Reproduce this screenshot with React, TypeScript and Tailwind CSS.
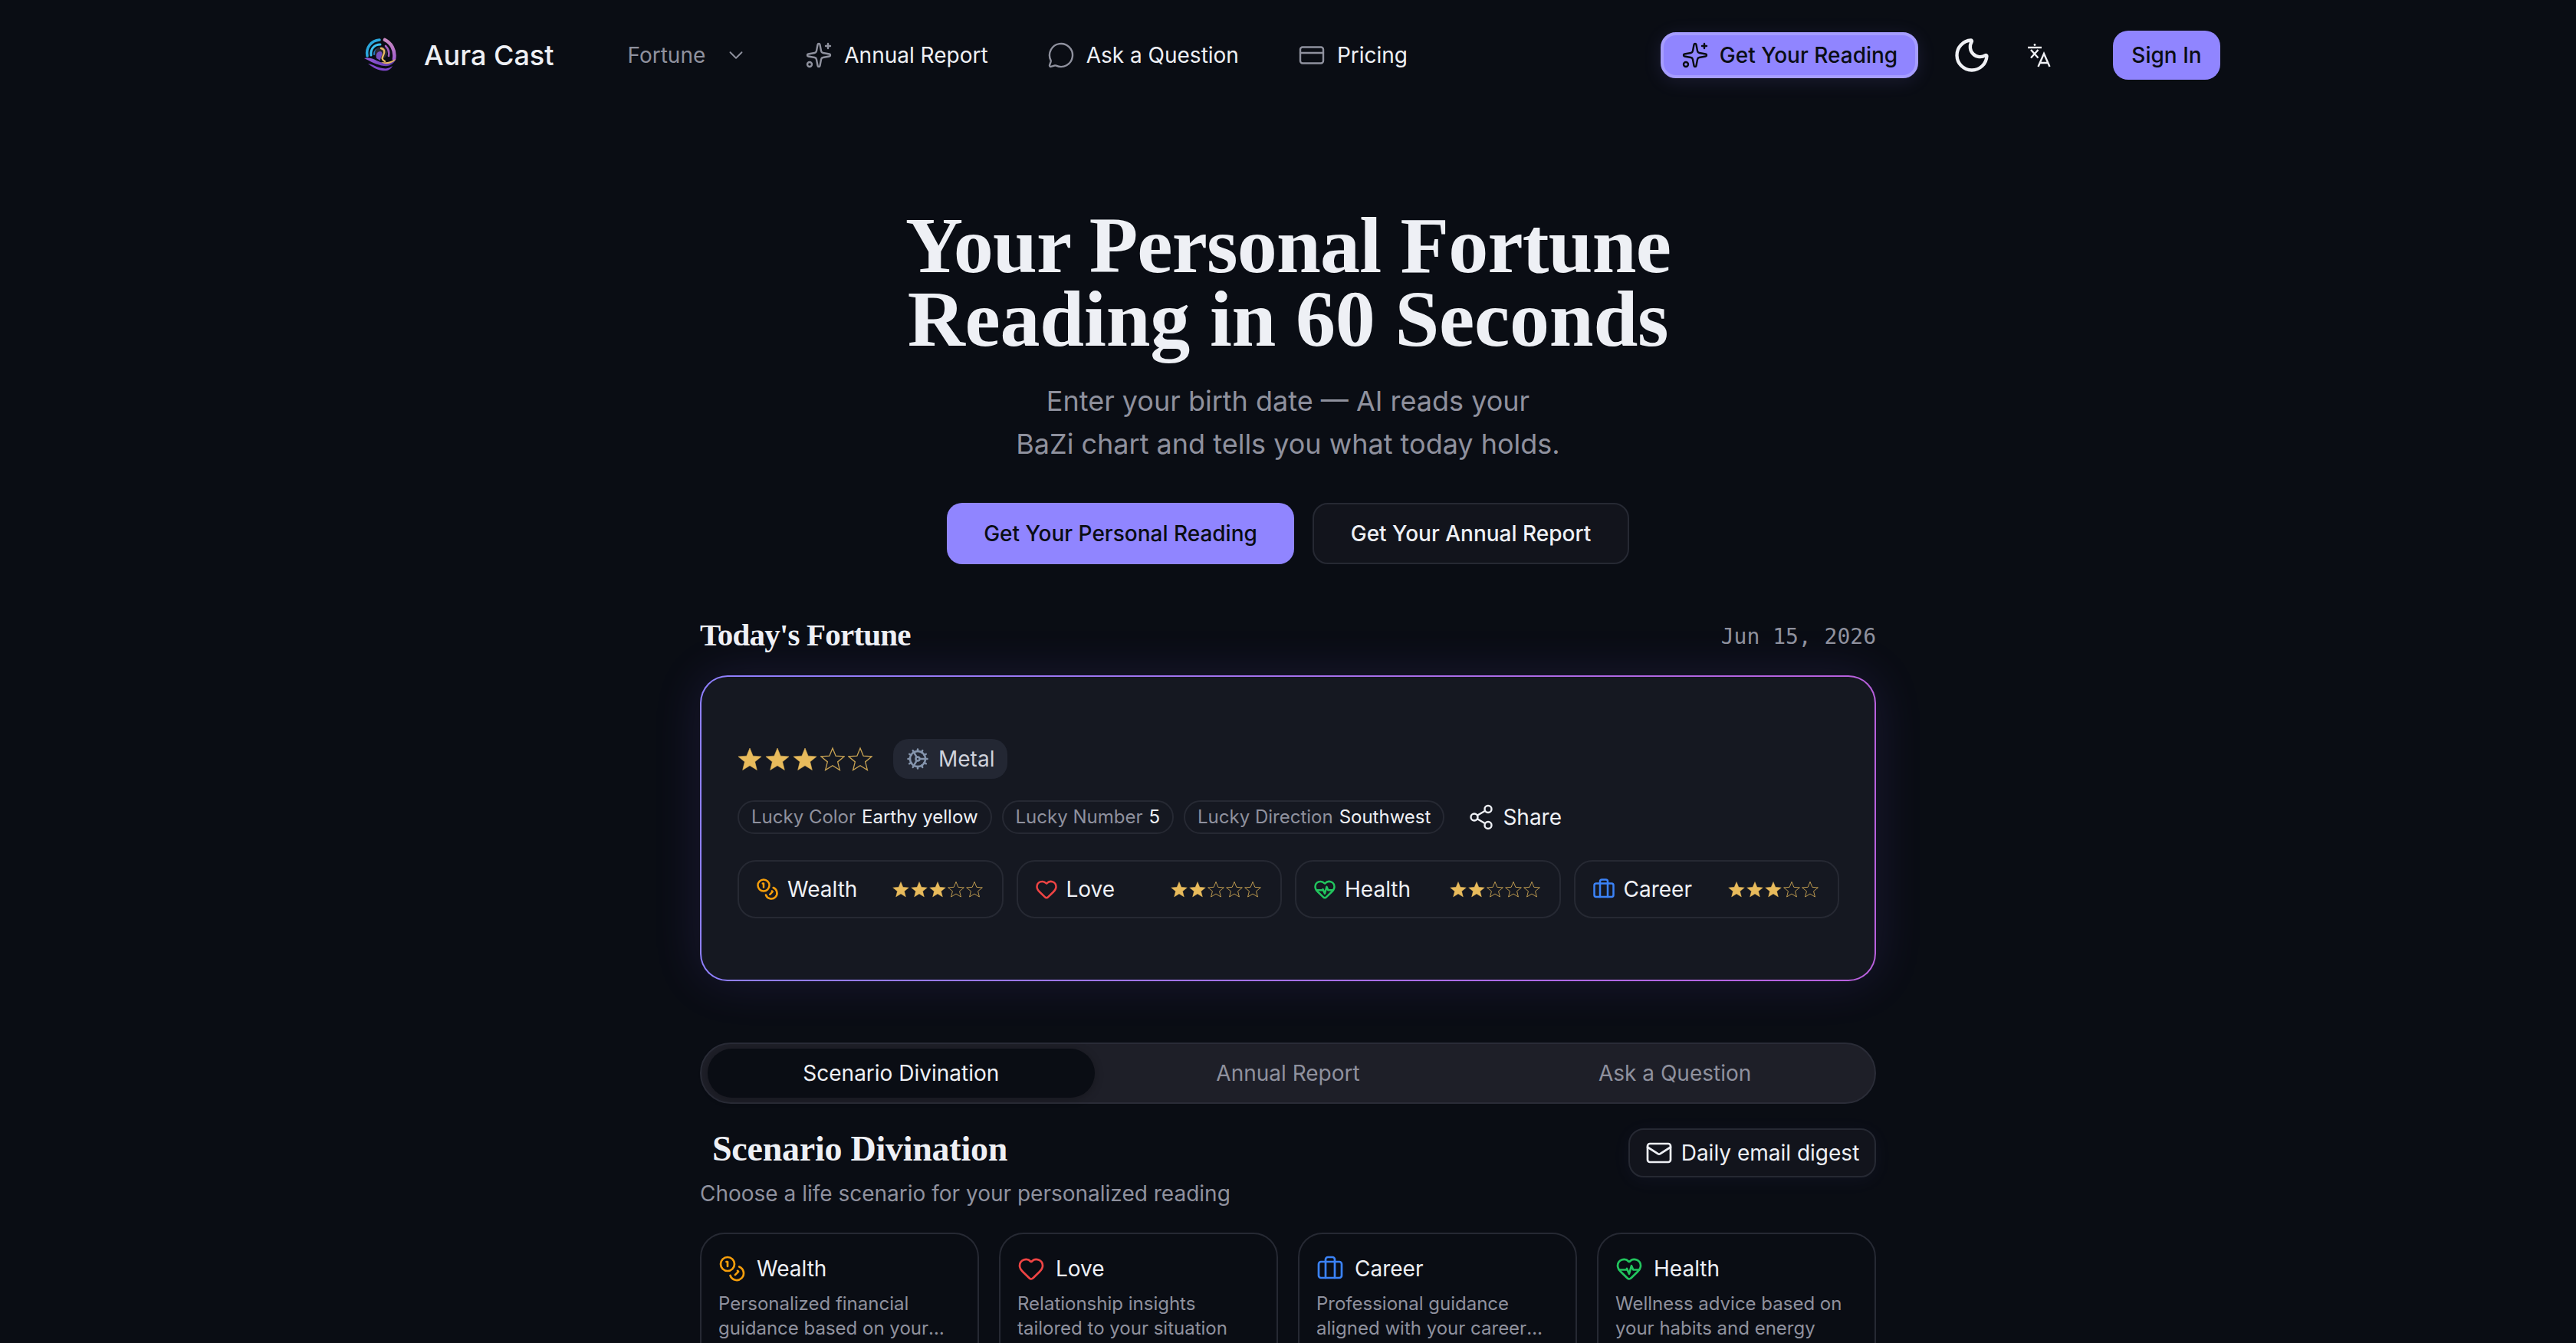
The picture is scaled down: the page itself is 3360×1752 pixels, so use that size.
import { Sparkles, MessageCircle, CreditCard, ChevronDown, Moon, Cog, Share2, Coins, Heart, HeartPulse, Briefcase, Mail } from "lucide-react";

const serif = "font-['Liberation_Serif',serif]";

function Star({ filled, size }: { filled: boolean; size: number }) {
  return (
    <svg width={size} height={size} viewBox="0 0 24 24" className="shrink-0">
      <path
        d="M12 1.5l3.1 7.6 8.2.6-6.3 5.2 2 8-7-4.3-7 4.3 2-8L.7 9.7l8.2-.6z"
        fill={filled ? "#e8bb5c" : "none"}
        stroke="#e8bb5c"
        strokeOpacity={filled ? 1 : 0.85}
        strokeWidth={filled ? 0.4 : 1}
      />
    </svg>
  );
}

function Stars({ n, size, big }: { n: number; size: number; big?: boolean }) {
  return (
    <div className={big ? "flex gap-[4px]" : "flex gap-[2px]"}>
      {[0, 1, 2, 3, 4].map((i) => (
        <Star key={i} filled={i < n} size={size} />
      ))}
    </div>
  );
}

function Logo() {
  return (
    <svg width="48" height="46" viewBox="0 0 48 46" fill="none" className="shrink-0">
      <defs>
        <linearGradient id="lg1" x1="0" y1="0" x2="1" y2="0">
          <stop offset="0" stopColor="#9a5cdc" />
          <stop offset="1" stopColor="#5a37a8" />
        </linearGradient>
        <linearGradient id="lg2" x1="0" y1="0" x2="0" y2="1">
          <stop offset="0" stopColor="#c98ac0" />
          <stop offset="1" stopColor="#a45fd0" />
        </linearGradient>
      </defs>
      <path d="M7 24C5 13 12 4 23 3" stroke="#2aa6dc" strokeWidth="3.6" strokeLinecap="round" />
      <path d="M12 23C11 15 16 9 24 9" stroke="#3fc0f0" strokeWidth="3" strokeLinecap="round" />
      <path d="M16 22C16 18 19 14 24 14" stroke="#2478c0" strokeWidth="2.2" strokeLinecap="round" />
      <path d="M30 3C38 7 44 16 42 28" stroke="url(#lg2)" strokeWidth="4.6" strokeLinecap="round" />
      <path d="M35 24C36 19 34 14 31 11" stroke="#a45fc0" strokeWidth="2.6" strokeLinecap="round" />
      <circle cx="25" cy="20" r="8" fill="#2c2a33" />
      <path d="M19 27c-1-5 1-9 5-9 2 0 3 3 2 5-1 3-2 4-2 7z" fill="#7a4fc0" />
      <path d="M25 14c5 1 5 5 3 9s-2 6 2 8" stroke="#e9bb62" strokeWidth="2.4" strokeLinecap="round" />
      <path d="M3 27c8-2 14 2 21 5 7 2 14 1 20-3-2 5-8 9-15 8-9-1-18-6-26-10z" fill="url(#lg1)" />
      <path d="M25 32c6 1 12 0 19-4-1 2-2 3-4 4-5 3-10 3-15 0z" fill="#e9bb62" />
      <path d="M8 34c7 1 11 5 19 6 5 1 9 0 13-3-3 6-9 7-14 6-7-1-13-5-18-9z" fill="#8148cc" />
    </svg>
  );
}

function LangIcon() {
  return (
    <svg width="32" height="32" viewBox="0 0 32 32" fill="none" stroke="#f0f1f5" strokeWidth="2.4" className="shrink-0">
      <circle cx="10" cy="2.5" r="1.4" fill="#f0f1f5" stroke="none" />
      <path d="M1 6h18" />
      <path d="M5 9l9.5 10.5M14.5 9L5 19.5" />
      <path d="M14.5 31l7.5-17 7.5 17M17 26h10" />
    </svg>
  );
}

const scores = [
  { label: "Wealth", n: 3, Icon: Coins, color: "text-[#f59e0b]" },
  { label: "Love", n: 2, Icon: Heart, color: "text-[#ef4444]" },
  { label: "Health", n: 2, Icon: HeartPulse, color: "text-[#22c55e]" },
  { label: "Career", n: 3, Icon: Briefcase, color: "text-[#3b82f6]" },
];

const scenarios = [
  { label: "Wealth", Icon: Coins, color: "text-[#f59e0b]", text: "Personalized financial guidance based on your unique chart and current cycle" },
  { label: "Love", Icon: Heart, color: "text-[#ef4444]", text: "Relationship insights tailored to your situation" },
  { label: "Career", Icon: Briefcase, color: "text-[#3b82f6]", text: "Professional guidance aligned with your career goals and timing" },
  { label: "Health", Icon: HeartPulse, color: "text-[#22c55e]", text: "Wellness advice based on your habits and energy" },
];

function Lucky({ k, v }: { k: string; v: string }) {
  return (
    <div className="h-[44px] rounded-full border-2 border-[#262933] px-[16px] flex items-center gap-[8px] text-[24px] whitespace-nowrap">
      <span className="text-[#8f919e]">{k}</span>
      <span className="text-[#eef0f5]">{v}</span>
    </div>
  );
}

export default function App() {
  return (
    <div className="h-screen overflow-hidden bg-[#0a0d14] text-[#eef0f5] font-['Inter',sans-serif]">
      <nav className="w-[2432px] mx-auto h-[144px] flex items-center pl-[8px]">
        <Logo />
        <span className="ml-[33px] text-[36px] font-medium">Aura Cast</span>
        <div className="ml-[96px] flex items-center gap-[25px] text-[#8f919e] text-[28px]">
          <span>Fortune</span>
          <ChevronDown size={30} strokeWidth={1.5} />
        </div>
        <div className="ml-[75px] flex items-center gap-[77px] text-[28px]">
          <div className="flex items-center gap-[15px]">
            <Sparkles size={36} strokeWidth={1.6} className="text-[#8f919e]" />
            <span>Annual Report</span>
          </div>
          <div className="flex items-center gap-[15px]">
            <MessageCircle size={36} strokeWidth={1.6} className="text-[#8f919e]" />
            <span>Ask a Question</span>
          </div>
          <div className="flex items-center gap-[15px]">
            <CreditCard size={36} strokeWidth={1.6} className="text-[#8f919e]" />
            <span>Pricing</span>
          </div>
        </div>
        <div className="ml-auto flex items-center">
          <button className="h-[60px] w-[336px] rounded-[20px] bg-[#9085ff] border-4 border-[#a69dff] text-[#0a0d14] text-[28px] font-medium flex items-center justify-center gap-[14px] shadow-[0_4px_24px_rgba(144,133,255,0.12)]">
            <Sparkles size={36} strokeWidth={1.6} />
            <span>Get Your Reading</span>
          </button>
          <Moon size={52} strokeWidth={2} className="ml-[44px] text-[#f0f1f5]" />
          <div className="ml-[46px]">
            <LangIcon />
          </div>
          <button className="ml-[80px] h-[64px] w-[140px] rounded-[20px] bg-[#9085ff] text-[#0a0d14] text-[28px] font-medium">
            Sign In
          </button>
        </div>
      </nav>

      <main className="w-[1534px] mx-auto">
        <h1 className={`${serif} mt-[128px] text-center text-[104px] leading-[96px] tracking-[-0.8px] font-bold text-[#eef0f5]`}>
          Your Personal Fortune
          <br />
          <span className="tracking-[-0.2px]">Reading in 60 Seconds</span>
        </h1>
        <p className="mt-[31px] text-center text-[36px] leading-[56px] text-[#8f919e]">
          Enter your birth date — AI reads your
          <br />
          BaZi chart and tells you what today holds.
        </p>
        <div className="mt-[49px] flex justify-center gap-[24px]">
          <button className="h-[80px] w-[453px] rounded-[20px] bg-[#9085ff] text-[#0a0d14] text-[28px] font-medium">
            Get Your Personal Reading
          </button>
          <button className="h-[80px] w-[413px] rounded-[20px] bg-[#12141c] border-2 border-[#262933] text-[#eef0f5] text-[28px] font-medium">
            Get Your Annual Report
          </button>
        </div>

        <div className="mt-[64px] flex items-center justify-between">
          <h2 className={`${serif} text-[41px] leading-[56px] tracking-[-0.8px] font-bold`}>Today's Fortune</h2>
          <span className="font-['DejaVu_Sans_Mono',monospace] text-[28px] text-[#8f919e] mt-[6px]">Jun 15, 2026</span>
        </div>

        <div className="mt-[25px] rounded-[36px] p-[2px] bg-linear-to-r from-[#8f80ff] to-[#b860dd] shadow-[0_0_64px_rgba(130,90,240,0.14)]">
          <div className="rounded-[34px] bg-[#151821] pl-[47px] pr-[46px] pt-[81px] pb-[80px]">
            <div className="flex items-center gap-[27px]">
              <Stars n={3} size={32} big />
              <div className="h-[52px] px-[17px] rounded-[20px] bg-[#232733] flex items-center gap-[12px] text-[28px] text-[#cfd2db]">
                <Cog size={30} strokeWidth={2} className="text-[#8595ad]" />
                <span>Metal</span>
              </div>
            </div>
            <div className="mt-[28px] flex items-center gap-[13px]">
              <Lucky k="Lucky Color" v="Earthy yellow" />
              <Lucky k="Lucky Number" v="5" />
              <Lucky k="Lucky Direction" v="Southwest" />
              <div className="ml-[17px] flex items-center gap-[10px] text-[28px]">
                <Share2 size={36} strokeWidth={1.6} />
                <span>Share</span>
              </div>
            </div>
            <div className="mt-[34px] grid grid-cols-4 gap-[17px]">
              {scores.map(({ label, n, Icon, color }) => (
                <div key={label} className="h-[76px] rounded-[24px] border-2 border-[#262933] pl-[22px] pr-[25px] flex items-center justify-between">
                  <div className="flex items-center gap-[11px] text-[28px]">
                    <Icon size={30} strokeWidth={2} className={color} />
                    <span>{label}</span>
                  </div>
                  <Stars n={n} size={22} />
                </div>
              ))}
            </div>
          </div>
        </div>

        <div className="mt-[80px] h-[80px] rounded-full bg-[#1e1f28] border-2 border-[#2a2c37] grid grid-cols-3 items-center px-[8px] text-[28px] text-[#8f919e]">
          <div className="h-[64px] rounded-full bg-[#0a0d14] text-[#eef0f5] flex items-center justify-center shadow-[0_2px_12px_rgba(0,0,0,0.25)]">
            Scenario Divination
          </div>
          <div className="text-center">Annual Report</div>
          <div className="text-center">Ask a Question</div>
        </div>

        <div className="mt-[32px] flex items-start justify-between">
          <div>
            <h2 className={`${serif} -mt-[1px] pl-[16px] text-[46px] leading-[56px] tracking-[-0.25px] font-bold`}>Scenario Divination</h2>
            <p className="mt-[8px] text-[28px] leading-[44px] text-[#8f919e]">Choose a life scenario for your personalized reading</p>
          </div>
          <button className="h-[64px] w-[323px] rounded-[20px] bg-[#12141c] border-2 border-[#262933] text-[28px] flex items-center justify-center gap-[11px] shadow-[0_4px_24px_rgba(144,133,255,0.05)]">
            <Mail size={36} strokeWidth={1.8} />
            <span>Daily email digest</span>
          </button>
        </div>

        <div className="mt-[29px] grid grid-cols-4 gap-[26px]">
          {scenarios.map(({ label, Icon, color, text }) => (
            <div key={label} className="h-[240px] rounded-[32px] border-2 border-[#262933] px-[22px] pt-[24px]">
              <div className="flex items-center gap-[14px] text-[28px]">
                <Icon size={36} strokeWidth={1.8} className={color} />
                <span>{label}</span>
              </div>
              <p className="mt-[9px] text-[24px] leading-[32px] text-[#8f919e] line-clamp-2">{text}</p>
            </div>
          ))}
        </div>
      </main>
    </div>
  );
}
